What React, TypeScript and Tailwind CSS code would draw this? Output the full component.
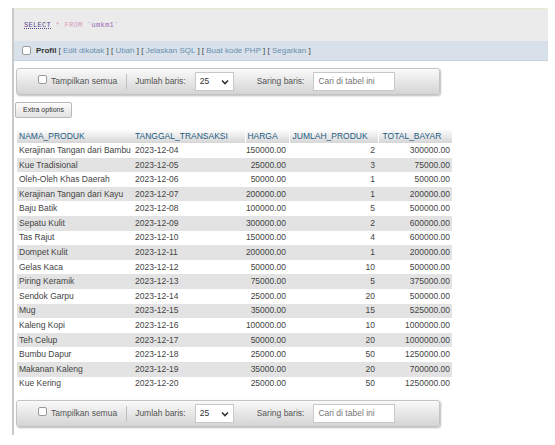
const rows: [string, string, string, string, string][] = [
  ["Kerajinan Tangan dari Bambu", "2023-12-04", "150000.00", "2", "300000.00"],
  ["Kue Tradisional", "2023-12-05", "25000.00", "3", "75000.00"],
  ["Oleh-Oleh Khas Daerah", "2023-12-06", "50000.00", "1", "50000.00"],
  ["Kerajinan Tangan dari Kayu", "2023-12-07", "200000.00", "1", "200000.00"],
  ["Baju Batik", "2023-12-08", "100000.00", "5", "500000.00"],
  ["Sepatu Kulit", "2023-12-09", "300000.00", "2", "600000.00"],
  ["Tas Rajut", "2023-12-10", "150000.00", "4", "600000.00"],
  ["Dompet Kulit", "2023-12-11", "200000.00", "1", "200000.00"],
  ["Gelas Kaca", "2023-12-12", "50000.00", "10", "500000.00"],
  ["Piring Keramik", "2023-12-13", "75000.00", "5", "375000.00"],
  ["Sendok Garpu", "2023-12-14", "25000.00", "20", "500000.00"],
  ["Mug", "2023-12-15", "35000.00", "15", "525000.00"],
  ["Kaleng Kopi", "2023-12-16", "100000.00", "10", "1000000.00"],
  ["Teh Celup", "2023-12-17", "50000.00", "20", "1000000.00"],
  ["Bumbu Dapur", "2023-12-18", "25000.00", "50", "1250000.00"],
  ["Makanan Kaleng", "2023-12-19", "35000.00", "20", "700000.00"],
  ["Kue Kering", "2023-12-20", "25000.00", "50", "1250000.00"],
];

function Checkbox() {
  return (
    <span className="inline-block w-[9px] h-[9px] border border-[#9a9a9a] rounded-[2px] bg-white" />
  );
}

function NavBar() {
  return (
    <div className="ml-[2px] w-[424px] h-[27px] flex items-center rounded-[3px] border border-[#c4c4c4] bg-gradient-to-b from-[#fafafa] to-[#d4d4d4] shadow-[1px_1px_2px_#bbb] text-[8.5px] text-[#555]">
      <span className="ml-[21px]">
        <Checkbox />
      </span>
      <span className="ml-[4px]">Tampilkan semua</span>
      <span className="ml-[9px] h-[15px] border-l border-[#bdbdbd]" />
      <span className="ml-[8px]">Jumlah baris:</span>
      <span className="ml-[9px] w-[39px] h-[19px] flex items-center justify-between px-[4px] bg-white border border-[#c8c8c8] text-[8.5px] text-[#333]">
        25
        <svg width="8" height="6" viewBox="0 0 8 6">
          <path d="M1 1.5 L4 4.5 L7 1.5" stroke="#333" strokeWidth="1.6" fill="none" />
        </svg>
      </span>
      <span className="ml-[23px]">Saring baris:</span>
      <span className="ml-[9px] w-[82px] h-[19px] flex items-center px-[4px] bg-white border border-[#c8c8c8] text-[#777]">
        Cari di tabel ini
      </span>
    </div>
  );
}

export default function App() {
  return (
    <div
      className="w-[555px] h-[445px] bg-white overflow-hidden"
      style={{ fontFamily: '"Liberation Sans", Arial, sans-serif' }}
    >
      <div className="ml-[12px] mt-[8px] h-[427px] border-l-2 border-[#c9c9c9]">
        <div className="mt-[2px] w-[534px]">
          <div className="h-[33px] bg-[#ebebeb] border-t border-[#e9e9cf] flex items-center pl-[10px]">
            <span
              className="text-[7px] tracking-[0.3px]"
              style={{ fontFamily: '"Liberation Mono", monospace' }}
            >
              <span className="text-[#5c4a8e] underline decoration-dotted">SELECT</span>
              <span className="text-[#d59bbd]"> * FROM </span>
              <span className="text-[#9a6ab8]">`umkm1`</span>
            </span>
          </div>
          <div className="h-[20px] bg-[#d8e1ea] border-b border-[#c6d3df] flex items-center pl-[8px] text-[8px] text-[#444]">
            <Checkbox />
            <span className="ml-[5px] font-bold text-[#333]">Profil</span>
            <span className="ml-[2px]">
              [ <span className="text-[#6a8fae]">Edit dikotak</span> ] [{" "}
              <span className="text-[#6a8fae]">Ubah</span> ] [{" "}
              <span className="text-[#6a8fae]">Jelaskan SQL</span> ] [{" "}
              <span className="text-[#6a8fae]">Buat kode PHP</span> ] [{" "}
              <span className="text-[#6a8fae]">Segarkan</span> ]
            </span>
          </div>
        </div>

        <div className="mt-[7px]">
          <NavBar />
        </div>

        <button className="ml-[1px] mt-[6px] h-[16px] w-[57px] rounded-[2px] border border-[#b9b9b9] bg-gradient-to-b from-[#fdfdfd] to-[#e2e2e2] text-[7px] text-[#333]">
          Extra options
        </button>

        <table className="ml-[3px] mt-[10px] w-[435px] border-collapse text-[8.5px] text-[#444]">
          <thead>
            <tr className="h-[14px] bg-gradient-to-b from-[#ffffff] to-[#d6d6d6] text-[#235a81]">
              <th className="w-[116px] text-left font-normal pl-[2px]">NAMA_PRODUK</th>
              <th className="w-[113px] text-left font-normal pl-[2px]">TANGGAL_TRANSAKSI</th>
              <th className="w-[43px] text-left font-normal pl-[1px] border-l border-white">HARGA</th>
              <th className="w-[89px] text-left font-normal pl-[3px] border-l border-white">JUMLAH_PRODUK</th>
              <th className="w-[74px] text-left font-normal pl-[4px] border-l border-white">TOTAL_BAYAR</th>
            </tr>
          </thead>
          <tbody>
            {rows.map((r, i) => (
              <tr key={i} className={i % 2 === 1 ? "h-[14.6px] bg-[#e3e3e3]" : "h-[14.6px] bg-white"}>
                <td className="pl-[2px] whitespace-nowrap">{r[0]}</td>
                <td className="pl-[2px]">{r[1]}</td>
                <td className="text-right pr-[3px]">{r[2]}</td>
                <td className="text-right pr-[3px]">{r[3]}</td>
                <td className="text-right pr-[2px]">{r[4]}</td>
              </tr>
            ))}
          </tbody>
        </table>

        <div className="mt-[9px]">
          <NavBar />
        </div>
      </div>
    </div>
  );
}
